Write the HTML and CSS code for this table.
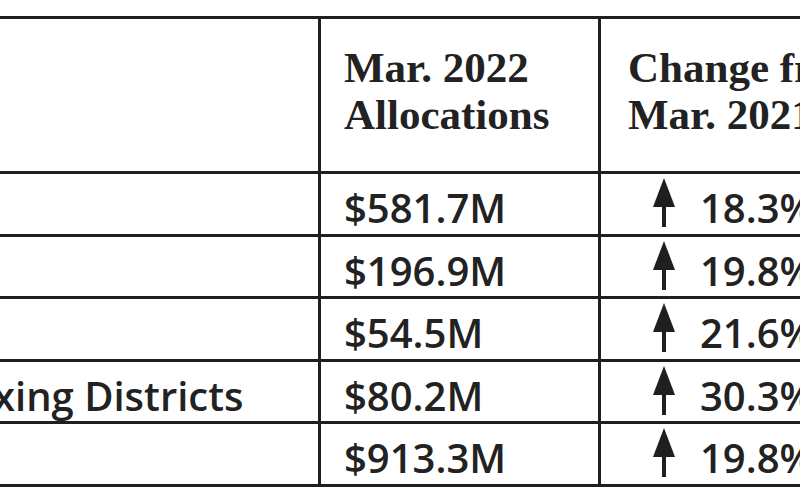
FILE: index.html
```html
<!DOCTYPE html>
<html lang="en">
<head>
<meta charset="utf-8">
<title>Local Sales Tax Allocations</title>
<link rel="stylesheet" href="styles.css">
</head>
<body>
<div class="frame">
  <table class="alloc">
    <colgroup>
      <col class="c-label">
      <col class="c-amount">
      <col class="c-change">
    </colgroup>
    <thead>
      <tr class="head-row">
        <th class="label"></th>
        <th class="amount">Mar. 2022<br>Allocations</th>
        <th class="change">Change from<br>Mar. 2021</th>
      </tr>
    </thead>
    <tbody>
      <tr class="row">
        <td class="label">Cities</td>
        <td class="amount">$581.7M</td>
        <td class="change"><div class="chg"><svg class="up" viewBox="0 0 22 49" width="22" height="49"><polygon points="0,29 11,0 22,29"/><rect x="9" y="27" width="4" height="22"/></svg><span class="pct">18.3%</span></div></td>
      </tr>
      <tr class="row">
        <td class="label">Transit Systems</td>
        <td class="amount">$196.9M</td>
        <td class="change"><div class="chg"><svg class="up" viewBox="0 0 22 49" width="22" height="49"><polygon points="0,29 11,0 22,29"/><rect x="9" y="27" width="4" height="22"/></svg><span class="pct">19.8%</span></div></td>
      </tr>
      <tr class="row">
        <td class="label">Counties</td>
        <td class="amount">$54.5M</td>
        <td class="change"><div class="chg"><svg class="up" viewBox="0 0 22 49" width="22" height="49"><polygon points="0,29 11,0 22,29"/><rect x="9" y="27" width="4" height="22"/></svg><span class="pct">21.6%</span></div></td>
      </tr>
      <tr class="row">
        <td class="label">Special Purpose Taxing Districts</td>
        <td class="amount">$80.2M</td>
        <td class="change"><div class="chg"><svg class="up" viewBox="0 0 22 49" width="22" height="49"><polygon points="0,29 11,0 22,29"/><rect x="9" y="27" width="4" height="22"/></svg><span class="pct">30.3%</span></div></td>
      </tr>
      <tr class="row">
        <td class="label">Total</td>
        <td class="amount">$913.3M</td>
        <td class="change"><div class="chg"><svg class="up" viewBox="0 0 22 49" width="22" height="49"><polygon points="0,29 11,0 22,29"/><rect x="9" y="27" width="4" height="22"/></svg><span class="pct">19.8%</span></div></td>
      </tr>
    </tbody>
  </table>
</div>
</body>
</html>
```

FILE: styles.css
```css
html, body {
  margin: 0;
  padding: 0;
  background: #ffffff;
}

body {
  width: 800px;
  height: 500px;
  overflow: hidden;
}

.frame {
  padding-top: 16px;
}

.alloc {
  margin-left: -420px;
  border-collapse: separate;
  border-spacing: 0;
  table-layout: fixed;
  width: 1421px;
  border-top: 3px solid #1f1f1f;
  color: #222222;
}

.c-label { width: 741px; }
.c-amount { width: 280px; }
.c-change { width: 400px; }

.alloc th,
.alloc td {
  padding: 0;
  border-bottom: 3px solid #1f1f1f;
  box-sizing: border-box;
  text-align: left;
  vertical-align: top;
}

.alloc .label,
.alloc .amount {
  border-right: 3px solid #1f1f1f;
}

.head-row {
  height: 155px;
}

.head-row th {
  font-family: "Liberation Serif", "Times New Roman", serif;
  font-weight: bold;
  font-size: 43px;
  line-height: 47px;
  padding-top: 25px;
}

.head-row .amount {
  padding-left: 23px;
}

.head-row .change {
  padding-left: 27px;
  white-space: nowrap;
}

.row {
  height: 62.6px;
}

.row td {
  font-family: "Open Sans", "Liberation Sans", sans-serif;
  font-weight: 600;
  font-size: 40px;
  line-height: 39px;
  padding-top: 14px;
  white-space: nowrap;
}

.row .label {
  padding-left: 52px;
}

.row .amount {
  padding-left: 23px;
}

.row .change {
  padding-top: 0;
  padding-left: 52px;
}

.chg {
  display: flex;
  align-items: flex-start;
  gap: 25px;
}

.up {
  display: block;
  margin-top: 4px;
  fill: #1f1f1f;
}

.pct {
  padding-top: 14px;
}
```
